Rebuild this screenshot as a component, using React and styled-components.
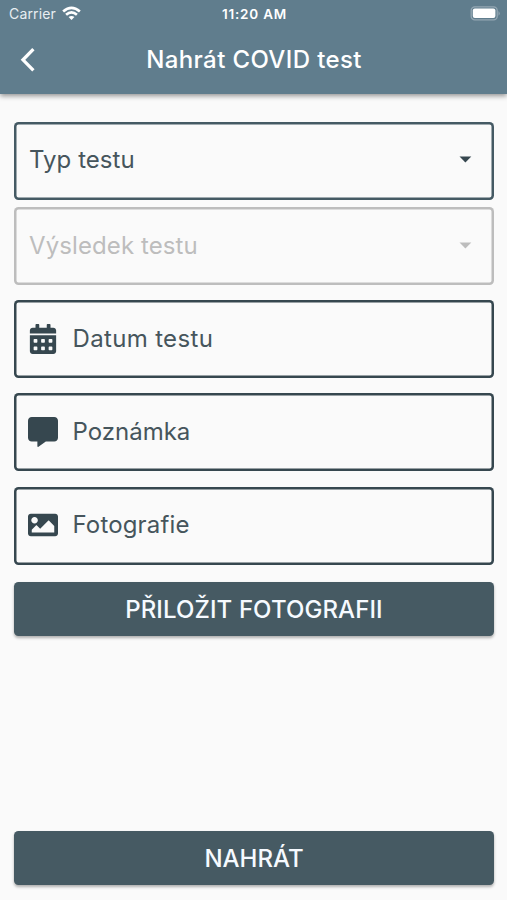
import React from "react";
import styled, { createGlobalStyle } from "styled-components";
import { FaCalendarAlt, FaCommentAlt, FaImage } from "react-icons/fa";

const GlobalStyle = createGlobalStyle`
  * { box-sizing: border-box; }
  body { margin: 0; background: #fafafa; font-family: Inter, "Liberation Sans", sans-serif; }
`;

const Screen = styled.div`
  display: flex;
  flex-direction: column;
  height: 900px;
  background: #fafafa;
  overflow: hidden;
`;

const Header = styled.header`
  height: 94px;
  flex: none;
  background: #607d8d;
  color: #fff;
  box-shadow: 0 2px 5px rgba(0, 0, 0, 0.42);
`;

const StatusBar = styled.div`
  display: grid;
  grid-template-columns: 1fr auto 1fr;
  align-items: center;
  height: 27px;
  padding: 0 7px 0 9px;
`;

const Carrier = styled.div`
  display: flex;
  align-items: center;
  gap: 6px;
  font-size: 14px;
  letter-spacing: 0.15px;
  color: #e8eef2;
`;

const Clock = styled.div`
  font-size: 13.5px;
  font-weight: 600;
  letter-spacing: 0.8px;
`;

const BatteryIcon = styled.svg`
  justify-self: end;
`;

const TitleBar = styled.div`
  display: grid;
  grid-template-columns: 60px 1fr 60px;
  align-items: center;
  height: 66px;
`;

const BackButton = styled.button`
  display: flex;
  padding: 0 0 0 19px;
  border: 0;
  background: none;
  color: #fff;
`;

const Title = styled.h1`
  margin: 0;
  padding: 0 0 0 1px;
  font-size: 24px;
  font-weight: 500;
  line-height: 30px;
  letter-spacing: 0.38px;
  text-align: center;
  white-space: nowrap;
`;

const Form = styled.main`
  display: flex;
  flex: 1;
  flex-direction: column;
  padding: 28px 13px 15px 14px;
`;

const Field = styled.div`
  display: flex;
  align-items: center;
  height: 78px;
  flex: none;
  margin-bottom: ${(p) => p.$gap}px;
  padding: 0 22px ${(p) => (p.$raised ? 3 : 1)}px 15px;
  border-radius: 4.5px;
  box-shadow: inset 0 0 0 2.5px ${(p) => (p.$disabled ? "#bdbdbd" : p.$border || "#36474f")};
  color: ${(p) => (p.$disabled ? "#bdbdbd" : "#36474f")};
`;

const FieldIcon = styled.span`
  display: flex;
  justify-content: center;
  width: 30px;
  margin: 1px 14.5px 0 -1px;
`;

const Label = styled.span`
  flex: 1;
  font-size: 24px;
  line-height: 30px;
  letter-spacing: ${(p) => p.$tracking}px;
  color: ${(p) => (p.$disabled ? "#bdbdbd" : "#46555c")};
`;

const Button = styled.button`
  display: flex;
  align-items: center;
  justify-content: center;
  height: 54px;
  flex: none;
  padding: 2px 0 0;
  margin-top: ${(p) => (p.$bottom ? "auto" : "0")};
  border: 0;
  border-radius: 4.5px;
  background: #465a63;
  color: #f6faff;
  font: 500 24px/30px Inter, "Liberation Sans", sans-serif;
  letter-spacing: ${(p) => (p.$bottom ? 0 : 0.1)}px;
  box-shadow: 0 2px 3px rgba(0, 0, 0, 0.3);
`;

const WifiIcon = () => (
  <svg width="19" height="15" viewBox="0 0 20 15" fill="none" stroke="#fff" strokeWidth="2.8">
    <path d="M1.2 5.4Q10 -2.4 18.8 5.4" />
    <path d="M4.3 8.8Q10 3.7 15.7 8.8" />
    <path d="M10 14.4L6.9 11.3Q10 8.7 13.1 11.3Z" fill="#fff" stroke="none" />
  </svg>
);

const Battery = () => (
  <BatteryIcon width="30" height="15" viewBox="0 0 30 15">
    <rect x="1.2" y="0.8" width="26" height="13" rx="3.6" fill="none" stroke="#94a7b3" strokeWidth="1.3" />
    <rect x="2.8" y="2.5" width="22.6" height="9.6" rx="2" fill="#fff" />
    <path d="M28.5 5Q31 7.4 28.5 9.8Z" fill="#94a7b3" />
  </BatteryIcon>
);

const Caret = () => (
  <svg width="13" height="7" viewBox="0 0 13 7">
    <path d="M0.5 0.4H12.3L6.4 6.4Z" fill="currentColor" />
  </svg>
);

export default function App() {
  return (
    <Screen>
      <GlobalStyle />
      <Header>
        <StatusBar>
          <Carrier>Carrier <WifiIcon /></Carrier>
          <Clock>11:20 AM</Clock>
          <Battery />
        </StatusBar>
        <TitleBar>
          <BackButton aria-label="Zpět">
            <svg width="18" height="26" viewBox="0 0 18 26" fill="none">
              <path d="M14.4 2.2L4 12.8L14.4 23.4" stroke="currentColor" strokeWidth="3.3" />
            </svg>
          </BackButton>
          <Title>Nahrát COVID test</Title>
        </TitleBar>
      </Header>
      <Form>
        <Field $gap={7} $raised $border="#455a64">
          <Label $tracking={0.05}>Typ testu</Label>
          <Caret />
        </Field>
        <Field $gap={15} $disabled>
          <Label $tracking={0.1} $disabled>Výsledek testu</Label>
          <Caret />
        </Field>
        <Field $gap={15}>
          <FieldIcon><FaCalendarAlt size={30} /></FieldIcon>
          <Label $tracking={0.34}>Datum testu</Label>
        </Field>
        <Field $gap={16}>
          <FieldIcon><FaCommentAlt size={30} /></FieldIcon>
          <Label $tracking={0}>Poznámka</Label>
        </Field>
        <Field $gap={17} $raised>
          <FieldIcon><FaImage size={30} /></FieldIcon>
          <Label $tracking={0.15}>Fotografie</Label>
        </Field>
        <Button>PŘILOŽIT FOTOGRAFII</Button>
        <Button $bottom>NAHRÁT</Button>
      </Form>
    </Screen>
  );
}
